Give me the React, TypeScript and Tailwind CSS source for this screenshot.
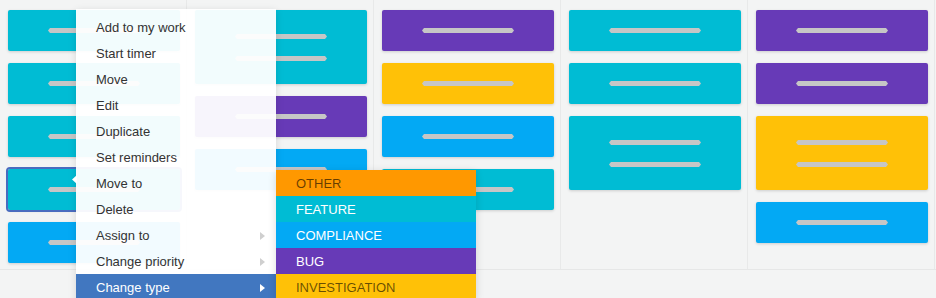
import { Fragment } from 'react'

// Colours of the work item types
const TYPE = {
  other: 'bg-[#ff9800]',
  feature: 'bg-[#00bcd4]',
  compliance: 'bg-[#03a9f4]',
  bug: 'bg-[#673ab7]',
  investigation: 'bg-[#ffc107]',
}

type Card = { color: string; lines: number; selected?: boolean }

const columns: Card[][] = [
  [
    { color: TYPE.feature, lines: 1 },
    { color: TYPE.feature, lines: 1 },
    { color: TYPE.feature, lines: 1 },
    { color: TYPE.feature, lines: 1, selected: true },
    { color: TYPE.compliance, lines: 1 },
  ],
  [
    { color: TYPE.feature, lines: 2 },
    { color: TYPE.bug, lines: 1 },
    { color: TYPE.compliance, lines: 1 },
  ],
  [
    { color: TYPE.bug, lines: 1 },
    { color: TYPE.investigation, lines: 1 },
    { color: TYPE.compliance, lines: 1 },
    { color: TYPE.feature, lines: 1 },
  ],
  [
    { color: TYPE.feature, lines: 1 },
    { color: TYPE.feature, lines: 1 },
    { color: TYPE.feature, lines: 2 },
  ],
  [
    { color: TYPE.bug, lines: 1 },
    { color: TYPE.bug, lines: 1 },
    { color: TYPE.investigation, lines: 2 },
    { color: TYPE.compliance, lines: 1 },
  ],
]

const menuItems = [
  { label: 'Add to my work' },
  { label: 'Start timer' },
  { label: 'Move' },
  { label: 'Edit' },
  { label: 'Duplicate' },
  { label: 'Set reminders' },
  { label: 'Move to' },
  { label: 'Delete' },
  { label: 'Assign to', sub: true },
  { label: 'Change priority', sub: true },
  { label: 'Change type', sub: true, active: true },
]

const typeItems = [
  { label: 'OTHER', bg: TYPE.other, text: 'text-[rgba(0,0,0,0.6)]' },
  { label: 'FEATURE', bg: TYPE.feature, text: 'text-white' },
  { label: 'COMPLIANCE', bg: TYPE.compliance, text: 'text-white' },
  { label: 'BUG', bg: TYPE.bug, text: 'text-white' },
  { label: 'INVESTIGATION', bg: TYPE.investigation, text: 'text-[rgba(0,0,0,0.6)]' },
]

function Bar() {
  return (
    <svg width="92" height="5" viewBox="0 0 92 5" className="block">
      <polygon points="2,0 90,0 92,2.5 90,5 2,5 0,2.5" fill="#c6c6c6" />
    </svg>
  )
}

function TaskCard({ card }: { card: Card }) {
  return (
    <div
      className={`${card.color} ${card.lines === 2 ? 'h-[74px] gap-[17px]' : 'h-[41px]'} ${
        card.selected ? 'outline-2 outline-[#4a6cbf]' : ''
      } flex w-[172px] flex-col items-center justify-center rounded-[2px] shadow-[0_1px_3px_rgba(0,0,0,0.16)]`}
    >
      {Array.from({ length: card.lines }).map((_, i) => (
        <Fragment key={i}>
          <Bar />
        </Fragment>
      ))}
    </div>
  )
}

function Caret({ white }: { white?: boolean }) {
  return (
    <svg width="5" height="8" viewBox="0 0 5 8" className="ml-auto mr-[11px]">
      <polygon points="0,0 5,4 0,8" fill={white ? '#ffffff' : '#cfcfcf'} />
    </svg>
  )
}

export default function App() {
  return (
    <div
      className="relative h-[298px] w-[936px] overflow-hidden bg-[#f3f4f4]"
      style={{ fontFamily: '"Liberation Sans", Arial, sans-serif' }}
    >
      {/* Board */}
      <div className="flex h-[270px] border-b border-[#e6e7e7]">
        {columns.map((col, ci) => (
          <div
            key={ci}
            className="flex w-[187px] shrink-0 flex-col gap-3 border-r border-[#e8e9e9] pl-2 pt-[10px]"
          >
            {col.map((card, i) => (
              <TaskCard key={i} card={card} />
            ))}
          </div>
        ))}
      </div>

      {/* Context menu */}
      <div className="absolute left-[76px] top-[9px] w-[200px] bg-white/95 py-[5px] shadow-[0_2px_8px_rgba(0,0,0,0.12)]">
        <svg width="5" height="9" viewBox="0 0 5 9" className="absolute -left-[4px] top-[166px]">
          <polygon points="5,0 0,4.5 5,9" fill="#ffffff" />
        </svg>
        {menuItems.map((item) => (
          <div
            key={item.label}
            className={`flex h-[26px] items-center pl-5 pt-[2px] text-[13px] ${
              item.active ? 'bg-[#4177c0] text-white' : 'text-[#333333]'
            }`}
          >
            <span>{item.label}</span>
            {item.sub && <Caret white={item.active} />}
          </div>
        ))}
      </div>

      {/* Type submenu */}
      <div className="absolute left-[276px] top-[170px] w-[200px] shadow-[0_2px_8px_rgba(0,0,0,0.14)]">
        {typeItems.map((t) => (
          <div
            key={t.label}
            className={`${t.bg} ${t.text} flex h-[26px] items-center pl-5 pt-[2px] text-[13px]`}
          >
            {t.label}
          </div>
        ))}
      </div>
    </div>
  )
}
